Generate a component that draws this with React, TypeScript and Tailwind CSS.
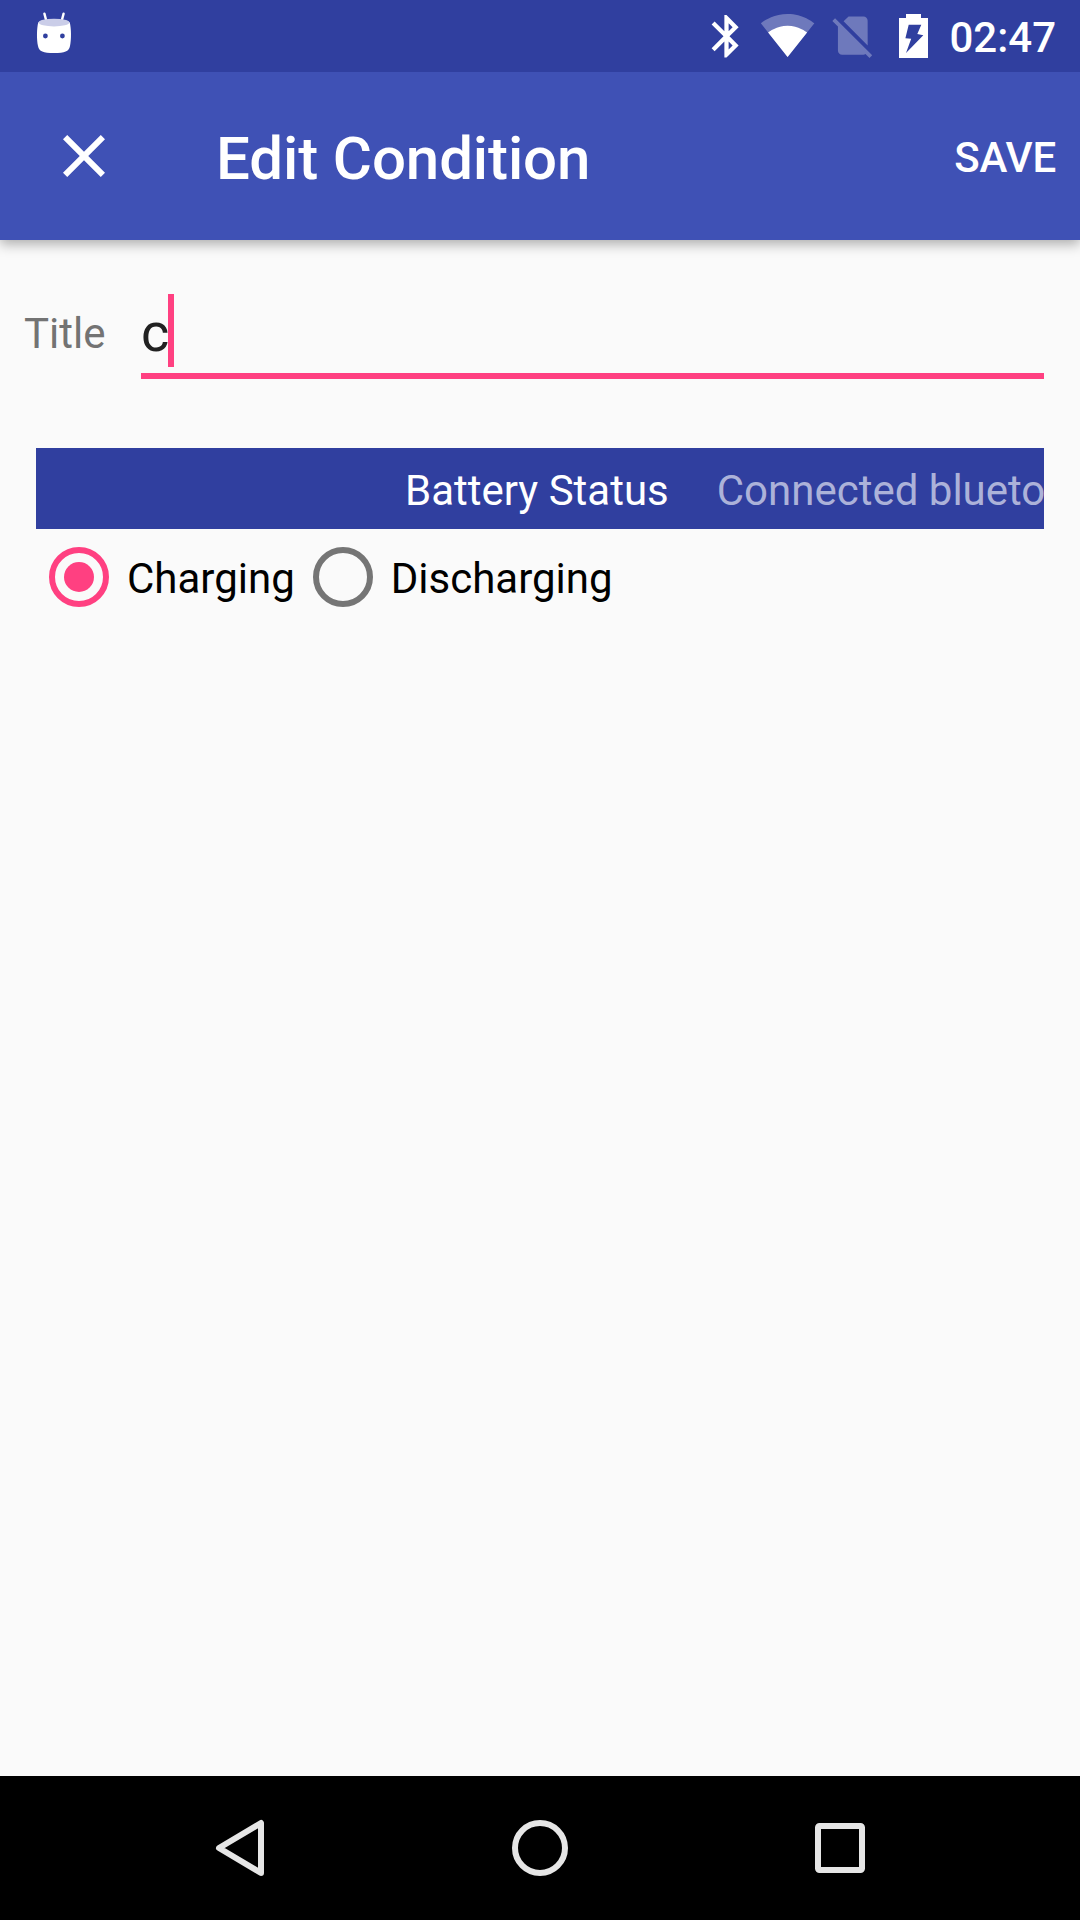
function StatusBar() {
  return (
    <div className="relative z-10 flex h-[72px] shrink-0 items-start bg-[#303f9f] text-white">
      <svg className="ml-9 h-[72px] w-9" viewBox="36 0 36 72" fill="#fff">
        <path d="M44.4 13.6L46.6 22M63.6 13.6L61.4 22" stroke="#fff" strokeWidth="2.4" strokeLinecap="round" />
        <path d="M38.3 22.5C41 18.5 67 18.5 69.7 22.5C71.4 28 71.4 40 70 46C68.8 51.5 65 53 54 53S39.2 51.5 38 46C36.6 40 36.6 28 38.3 22.5z" />
        <ellipse cx="54" cy="22.6" rx="15.4" ry="3.9" fill="#cacde8" />
        <circle cx="45.4" cy="36" r="2.4" fill="#303f9f" />
        <circle cx="62.4" cy="36" r="2.4" fill="#303f9f" />
      </svg>
      <svg className="ml-auto h-[72px] w-[238px]" viewBox="700 0 238 72" fill="#fff">
        <path
          transform="translate(701 10.8) scale(2.125)"
          d="M17.71 7.71L12 2h-1v7.59L6.41 5 5 6.41 10.59 12 5 17.59 6.41 19 11 14.41V22h1l5.71-5.71-4.3-4.29 4.3-4.29zM13 5.83l1.88 1.88L13 9.59V5.83zm1.88 10.46L13 18.17v-3.76l1.88 1.88z"
        />
        <g transform="translate(760 7.1) scale(2.3 2.32)">
          <path fillOpacity="0.3" d="M12.01 21.49L23.64 7c-.45-.34-4.93-4-11.64-4C5.28 3 .81 6.66.36 7l11.63 14.49.01.01.01-.01z" />
          <path d="M3.53 10.95l8.46 10.54.01.01.01-.01 8.46-10.54C20.04 10.62 16.81 8 12 8c-4.81 0-8.04 2.62-8.47 2.95z" />
        </g>
        <path
          fillOpacity="0.3"
          transform="translate(827.3 10) scale(2.125)"
          d="M18.99 5c0-1.1-.89-2-1.99-2h-7L7.66 5.34 19 16.68 18.99 5zM3.65 3.88L2.38 5.15 5 7.77V19c0 1.1.9 2 2 2h10.01c.35 0 .67-.1.96-.26l1.88 1.88 1.27-1.27L3.65 3.88z"
        />
        <path d="M906 14H921V18H928V58H899V18H906z" />
        <path fill="#303f9f" d="M908.7 24.8H921.3L917.3 34L923.3 35.2L906 53L911.2 38.8L905.4 38.2z" />
      </svg>
      <div className="mr-6 ml-[11px] mt-[14px] w-[107px] text-right text-[42px] leading-[48px] font-medium">02:47</div>
    </div>
  );
}

function Toolbar() {
  return (
    <header className="relative flex h-[168px] shrink-0 items-start bg-[#3f51b5] text-white shadow-[0_4px_12px_rgba(0,0,0,0.32)]">
      <button className="ml-12 mt-12 h-[72px] w-[72px]" aria-label="Close">
        <svg viewBox="0 0 24 24" className="h-[72px] w-[72px]" fill="#fff">
          <path d="M19 6.41L17.59 5 12 10.59 6.41 5 5 6.41 10.59 12 5 17.59 6.41 19 12 13.41 17.59 19 19 17.59 13.41 12z" />
        </svg>
      </button>
      <h1 className="ml-24 mt-[51px] text-[60px] leading-[72px] font-medium tracking-[-0.1px]">Edit Condition</h1>
      <button className="mr-6 ml-auto mt-[62px] text-[42px] leading-[48px] font-medium tracking-[-0.15px]">SAVE</button>
    </header>
  );
}

function TitleField() {
  return (
    <div className="flex h-[139px] items-start">
      <label className="ml-6 mt-[70px] w-[117px] text-[42px] leading-[48px] text-[#737373]">Title</label>
      <div className="flex h-full w-[903px] items-start border-b-[6px] border-[#ff4081]">
        <span className="mt-[61px] w-[27px] text-[54px] leading-[64px] text-[#212121]">c</span>
        <span className="mt-[54px] h-[73px] w-[6px] bg-[#ff4081]" />
      </div>
    </div>
  );
}

function RadioOption({ label, checked }: { label: string; checked: boolean }) {
  return (
    <div className="flex items-start">
      <svg className="h-[60px] w-[60px]" viewBox="0 0 60 60" role="radio" aria-checked={checked}>
        <circle cx="30" cy="30" r="27" fill="none" strokeWidth="6" stroke={checked ? "#ff4081" : "#757575"} />
        {checked && <circle cx="30" cy="30" r="15" fill="#ff4081" />}
      </svg>
      <span className="ml-[18px] mt-[8px] text-[42px] leading-[48px] text-black">{label}</span>
    </div>
  );
}

function NavBar() {
  return (
    <nav className="flex h-36 shrink-0 items-center justify-center bg-black">
      <div className="flex w-[900px] justify-around">
        {[
          <path key="back" d="M21 -25V25L-21 0z" />,
          <circle key="home" r="25" />,
          <rect key="recent" x="-22" y="-22" width="44" height="44" rx="1.5" />,
        ].map((shape, i) => (
          <svg key={i} className="h-[72px] w-[72px]" viewBox="-36 -36 72 72" fill="none" stroke="#e6e6e6" strokeWidth="6" strokeLinejoin="round">
            {shape}
          </svg>
        ))}
      </div>
    </nav>
  );
}

export default function App() {
  return (
    <div className="flex h-[1920px] w-[1080px] flex-col overflow-hidden bg-[#fafafa] font-['Roboto',sans-serif] whitespace-nowrap">
      <StatusBar />
      <Toolbar />
      <main className="flex-1">
        <TitleField />
        <div className="mx-9 mt-[69px] flex h-[81px] items-start overflow-hidden bg-[#303f9f] text-[42px] leading-[48px]">
          <span className="ml-[369px] mt-[19px] text-white">Battery Status</span>
          <span className="ml-12 mt-[19px] text-[#acb2d9]">Connected bluetooth</span>
        </div>
        <div className="mt-[18px] ml-[49px] flex gap-[18px]">
          <RadioOption label="Charging" checked />
          <RadioOption label="Discharging" checked={false} />
        </div>
      </main>
      <NavBar />
    </div>
  );
}
